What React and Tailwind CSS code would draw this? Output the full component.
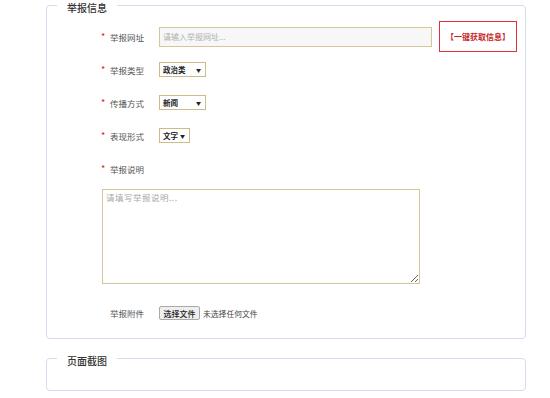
import React from 'react';

const font = "font-['Noto_Sans_CJK_SC','Noto_Sans',sans-serif]";

const Star = () => (
    <span className="w-[9px] text-[9px] leading-[9px] text-[#cc2222]">*</span>
);

const Label = ({ children }) => (
    <span className="w-[49px] text-[8.5px] leading-[10px] text-[#555]">{children}</span>
);

const Legend = ({ children }) => (
    <legend className="ml-[10px] px-[10px] h-[10px] text-[10px] leading-[16px] font-medium text-[#333]">
        {children}
    </legend>
);

const FakeSelect = ({ value, width }) => (
    <div
        className={`flex items-center justify-between h-[15px] border border-[#cabd8a] bg-white pl-[3px] pr-[4px] ${width}`}
    >
        <span className="text-[7.5px] leading-[9px] font-bold text-[#222]">{value}</span>
        <span className="text-[5px] leading-[6px] text-[#222]">▼</span>
    </div>
);

const App = () => {
    return (
        <div className={`w-[550px] h-[398px] bg-white overflow-hidden ${font}`}>
            <fieldset className="ml-[46px] w-[480px] border border-[#d5dcef] rounded-[4px]">
                <Legend>举报信息</Legend>

                <div className="pt-[10px] pl-[54px]">
                    <div className="flex items-center h-[33px]">
                        <Star />
                        <Label>举报网址</Label>
                        <input
                            className="w-[273px] h-[20px] border border-[#d3c799] bg-[#f7f7f7] px-[3px] text-[8px] outline-none placeholder:text-[#b0b0b0]"
                            placeholder="请输入举报网址..."
                        />
                        <div className="ml-[7px] w-[78px] h-[31px] flex items-center justify-center border border-[#e0303a] text-[8px] leading-[9px] font-bold text-[#c41f28]">
                            【一键获取信息】
                        </div>
                    </div>

                    <div className="flex items-center h-[33px]">
                        <Star />
                        <Label>举报类型</Label>
                        <FakeSelect value="政治类" width="w-[47px]" />
                    </div>

                    <div className="flex items-center h-[33px]">
                        <Star />
                        <Label>传播方式</Label>
                        <FakeSelect value="新闻" width="w-[47px]" />
                    </div>

                    <div className="flex items-center h-[33px]">
                        <Star />
                        <Label>表现形式</Label>
                        <FakeSelect value="文字" width="w-[31px]" />
                    </div>

                    <div className="flex items-center h-[33px]">
                        <Star />
                        <Label>举报说明</Label>
                    </div>

                    <textarea
                        className="block ml-[1px] mt-[4px] w-[318px] h-[95px] border border-[#d3c799] bg-white px-[3px] py-[2px] text-[8.5px] leading-[11px] tracking-[0.5px] outline-none placeholder:text-[#a8a8a8]"
                        placeholder="请填写举报说明..."
                    />

                    <div className="flex items-center h-[20px] mt-[19px] mb-[15px]">
                        <span className="w-[9px]" />
                        <Label>举报附件</Label>
                        <div className="h-[14px] w-[41px] flex items-center justify-center border border-[#a9a9a9] rounded-[2px] bg-[#efefef] text-[8px] leading-[9px] font-medium text-[#222]">
                            选择文件
                        </div>
                        <span className="ml-[3px] text-[7.8px] leading-[9px] text-[#444]">未选择任何文件</span>
                    </div>
                </div>
            </fieldset>

            <fieldset className="mt-[14px] ml-[46px] w-[480px] border border-[#d5dcef] rounded-[4px]">
                <Legend>页面截图</Legend>
                <div className="h-[27px]" />
            </fieldset>
        </div>
    );
};

export default App;
